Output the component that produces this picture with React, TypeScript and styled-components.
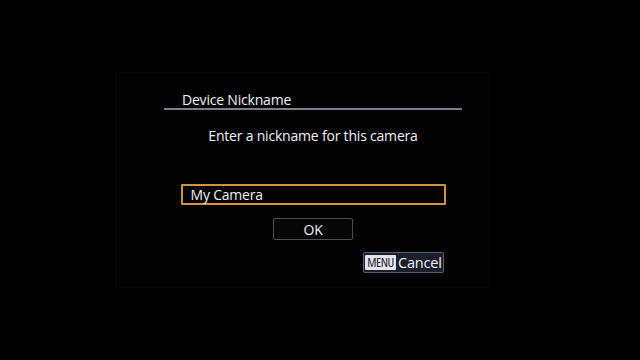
import React from 'react';
import styled, {createGlobalStyle} from 'styled-components';

const GlobalStyle = createGlobalStyle`
  html, body {
    margin: 0;
    padding: 0;
    background: #000;
  }
  body {
    font-family: 'Open Sans', 'Noto Sans', sans-serif;
    color: #f0f0f4;
  }
`;

const Page = styled.div`
  width: 640px;
  height: 360px;
  background: #000;
  overflow: hidden;
  display: flex;
  align-items: flex-start;
  padding: 72px 0 0 115px;
  box-sizing: border-box;
`;

// the faint lit area of the camera's LCD
const Screen = styled.div`
  width: 375px;
  height: 216px;
  background: #030303;
  box-shadow: inset 0 0 0 1px #080706;
  padding: 0 0 0 49px;
  box-sizing: border-box;
`;

const Dialog = styled.div`
  width: 298px;
  display: flex;
  flex-direction: column;
  align-items: center;
  font-size: 14px;
  letter-spacing: -0.2px;
`;

const Header = styled.div`
  align-self: stretch;
  height: 38px;
  box-sizing: border-box;
  padding: 19px 0 0 18px;
  border-bottom: 2px solid #7d7e86;
  line-height: 18px;
`;

const Prompt = styled.div`
  margin-top: 16px;
  line-height: 20px;
`;

const NameField = styled.div`
  margin-top: 38px;
  width: 265px;
  height: 21px;
  box-sizing: border-box;
  border: 2px solid #d4913c;
  border-radius: 1px;
  background: #040302;
  padding: 0 0 0 8px;
  line-height: 17px;
`;

const OkButton = styled.div`
  margin-top: 13px;
  width: 80px;
  height: 22px;
  box-sizing: border-box;
  border: 1px solid #4e4f55;
  border-radius: 2px;
  background: #060607;
  display: flex;
  align-items: center;
  justify-content: center;
`;

const CancelButton = styled.div`
  align-self: flex-end;
  margin: 12px 18px 0 0;
  width: 81px;
  height: 21px;
  box-sizing: border-box;
  border: 1px solid #5b5e6c;
  border-radius: 2px;
  background: #1c1e2c;
  display: flex;
  align-items: center;
  gap: 2px;
  padding: 0 0 0 1px;
  font-size: 14.5px;
`;

const MenuKey = styled.span`
  display: inline-flex;
  align-items: center;
  justify-content: center;
  width: 31px;
  height: 15px;
  border-radius: 1px;
  background: #e4e5ec;
  color: #1b1d2c;
  font-size: 13px;
  font-weight: 500;
  font-stretch: 75%;
  letter-spacing: -0.5px;
  line-height: 15px;
`;

export default function App() {
  return (
    <>
      <GlobalStyle />
      <Page>
        <Screen>
          <Dialog>
            <Header>Device Nickname</Header>
            <Prompt>Enter a nickname for this camera</Prompt>
            <NameField>My Camera</NameField>
            <OkButton>OK</OkButton>
            <CancelButton>
              <MenuKey>MENU</MenuKey>
              Cancel
            </CancelButton>
          </Dialog>
        </Screen>
      </Page>
    </>
  );
}
